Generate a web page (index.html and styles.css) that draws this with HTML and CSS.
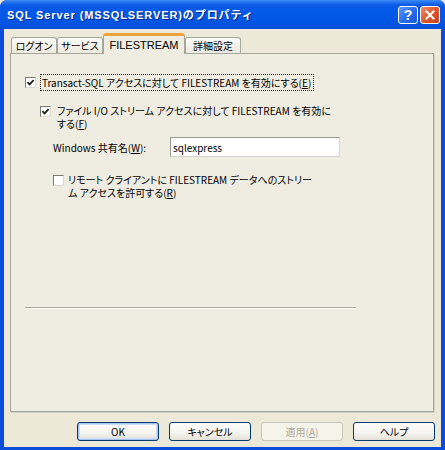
FILE: index.html
```html
<!DOCTYPE html>
<html lang="ja">
<head>
<meta charset="utf-8">
<title>SQL Server (MSSQLSERVER)のプロパティ</title>
<link rel="stylesheet" href="styles.css">
</head>
<body>
<div class="window">
  <div class="titlebar">
    <span class="title">SQL Server (MSSQLSERVER)のプロパティ</span>
    <div class="caption-btns">
      <span class="cap help">?</span>
      <span class="cap close"><svg width="10" height="10" viewBox="0 0 10 10"><path d="M1.5 1.5 L8.5 8.5 M8.5 1.5 L1.5 8.5" stroke="#fff" stroke-width="2" stroke-linecap="square"/></svg></span>
    </div>
  </div>
  <div class="client">
    <div class="tabs">
      <div class="tab t1 jp">ログオン</div>
      <div class="tab t2 jp">サービス</div>
      <div class="tab active">FILESTREAM</div>
      <div class="tab t4 jp">詳細設定</div>
    </div>
    <div class="panel">
      <div class="row row1">
        <span class="cb checked"><svg width="9" height="9" viewBox="0 0 9 9"><path d="M1.5 4.2 L3.6 6.4 L7.6 2.2" fill="none" stroke="#1e1e1e" stroke-width="1.8"/></svg></span>
        <span class="focus">Transact-SQL アクセスに対して FILESTREAM を有効にする(<u>E</u>)</span>
      </div>
      <div class="row row2">
        <span class="cb checked"><svg width="9" height="9" viewBox="0 0 9 9"><path d="M1.5 4.2 L3.6 6.4 L7.6 2.2" fill="none" stroke="#1e1e1e" stroke-width="1.8"/></svg></span>
        <span class="label">ファイル I/O ストリーム アクセスに対して FILESTREAM を有効に<br>する(<u>F</u>)</span>
      </div>
      <div class="row row3">
        <span class="share-label">Windows 共有名(<u>W</u>):</span>
        <span class="input">sqlexpress</span>
      </div>
      <div class="row row4">
        <span class="cb"></span>
        <span class="label">リモート クライアントに FILESTREAM データへのストリー<br>ム アクセスを許可する(<u>R</u>)</span>
      </div>
      <div class="separator"></div>
    </div>
    <div class="buttons">
      <span class="btn default">OK</span>
      <span class="btn">キャンセル</span>
      <span class="btn disabled">適用(<u>A</u>)</span>
      <span class="btn">ヘルプ</span>
    </div>
  </div>
</div>
</body>
</html>
```

FILE: styles.css
```css
html, body {
  margin: 0;
  padding: 0;
  background: #ECE9D8;
}

.window {
  width: 445px;
  height: 450px;
  display: flex;
  flex-direction: column;
  background: #0A4DDB;
  border-radius: 7px 7px 0 0;
  overflow: hidden;
  font-family: "Noto Sans CJK JP", sans-serif;
  font-feature-settings: "palt";
  font-size: 10px;
  line-height: 13px;
  color: #000;
}

.titlebar {
  height: 29px;
  flex: none;
  display: flex;
  align-items: center;
  justify-content: space-between;
  padding: 0 5px 0 7px;
  background: linear-gradient(#3C8CF7 0%, #2C78F0 6%, #0A5AE6 18%, #0058E8 50%, #0054E2 80%, #0A4DD8 100%);
}

.title {
  color: #fff;
  font-family: "Liberation Sans", "Noto Sans CJK JP", sans-serif;
  font-feature-settings: normal;
  font-weight: bold;
  font-size: 11px;
  letter-spacing: 0.9px;
  text-shadow: 1px 1px #0B2A8C;
  margin-top: 1px;
}

.caption-btns {
  display: flex;
  gap: 2px;
  margin-top: 1px;
}

.cap {
  width: 20px;
  height: 18px;
  box-sizing: border-box;
  border: 1px solid #fff;
  border-radius: 3px;
  display: flex;
  align-items: center;
  justify-content: center;
}

.help {
  background: linear-gradient(135deg, #5A9BFC 0%, #2A6DF0 50%, #1A55DD 100%);
  color: #fff;
  font-family: "Liberation Sans", sans-serif;
  font-weight: bold;
  font-size: 14px;
}

.close {
  background: linear-gradient(135deg, #F08A6A 0%, #E0582E 50%, #C8401C 100%);
}

.client {
  flex: 1;
  display: flex;
  flex-direction: column;
  background: #ECE9D8;
  margin: 0 4px 3px 4px;
}

.tabs {
  display: flex;
  align-items: flex-end;
  height: 25px;
  padding-left: 7px;
  box-sizing: border-box;
  position: relative;
  z-index: 1;
  margin-bottom: -1px;
}

.tab {
  height: 16px;
  box-sizing: border-box;
  border: 1px solid #A5A69C;
  border-bottom: none;
  border-radius: 3px 3px 0 0;
  background: linear-gradient(#FBFBF8, #ECEADF);
  display: flex;
  align-items: center;
  justify-content: center;
  font-family: "Liberation Sans", "Noto Sans CJK JP", sans-serif;
  font-size: 11px;
  margin-bottom: 1px;
}

.tab.jp {
  font-family: "Noto Sans CJK JP", sans-serif;
  font-size: 10px;
}

.t1 { width: 46px; }
.t2 { width: 46px; }
.t4 { width: 56px; }

.tab.active {
  width: 82px;
  height: 21px;
  border-top: 3px solid #F0A23C;
  border-color: #F0A23C #A5A69C #A5A69C #A5A69C;
  background: #EFEDE2;
  align-items: flex-start;
  padding-top: 3px;
  margin-bottom: 0;
}

.panel {
  width: 424px;
  height: 359px;
  margin-left: 6px;
  box-sizing: border-box;
  border: 1px solid #A5A69C;
  box-shadow: 1px 1px 0 #D2D0C2;
  background: #EFEDE2;
  display: flex;
  flex-direction: column;
}

.row {
  display: flex;
}

.cb {
  width: 11px;
  height: 11px;
  box-sizing: border-box;
  flex: none;
  background: #fff;
  border: 1px solid;
  border-color: #7C7C74 #DCDAD0 #DCDAD0 #7C7C74;
  display: flex;
  align-items: center;
  justify-content: center;
}

.row1 {
  margin-top: 20px;
  align-items: center;
}
.row1 .cb { margin-left: 14px; }
.focus {
  margin-left: 4px;
  border: 1px dotted #333;
  padding: 1px 2px 1px 1px;
}

.row2 {
  margin-top: 13px;
  align-items: flex-start;
}
.row2 .cb { margin-left: 29px; margin-top: 2px; }
.row2 .label { margin-left: 6px; }

.row3 {
  margin-top: 7px;
  align-items: center;
}
.share-label {
  margin-left: 42px;
  width: 117px;
}
.input {
  width: 170px;
  height: 20px;
  box-sizing: border-box;
  background: #fff;
  border: 1px solid;
  border-color: #9A9A94 #D4D4CE #D4D4CE #9A9A94;
  padding-left: 2px;
  display: flex;
  align-items: center;
}

.row4 {
  margin-top: 16px;
  align-items: flex-start;
}
.row4 .cb { margin-left: 42px; margin-top: 2px; }
.row4 .label { margin-left: 4px; }

.separator {
  margin: 108px 0 0 14px;
  width: 331px;
  height: 0;
  border-top: 1px solid #ACA899;
  border-bottom: 1px solid #fff;
}

.buttons {
  display: flex;
  justify-content: flex-end;
  gap: 10px;
  margin-top: 10px;
  padding-right: 6px;
}

.btn {
  width: 82px;
  height: 19px;
  box-sizing: border-box;
  border: 1px solid #003C74;
  border-radius: 3px;
  background: linear-gradient(#FFFFFF 0%, #F4F3EE 60%, #E3E0D6 100%);
  display: flex;
  align-items: center;
  justify-content: center;
}

.btn.default {
  box-shadow: inset 0 0 0 1px #A9C3EF, inset 0 0 0 2px #CFDDF6;
}

.btn.disabled {
  border-color: #C9C7BA;
  background: #F5F4EA;
  color: #ACA899;
}

u {
  text-decoration: underline;
  text-underline-offset: 1px;
}
```
